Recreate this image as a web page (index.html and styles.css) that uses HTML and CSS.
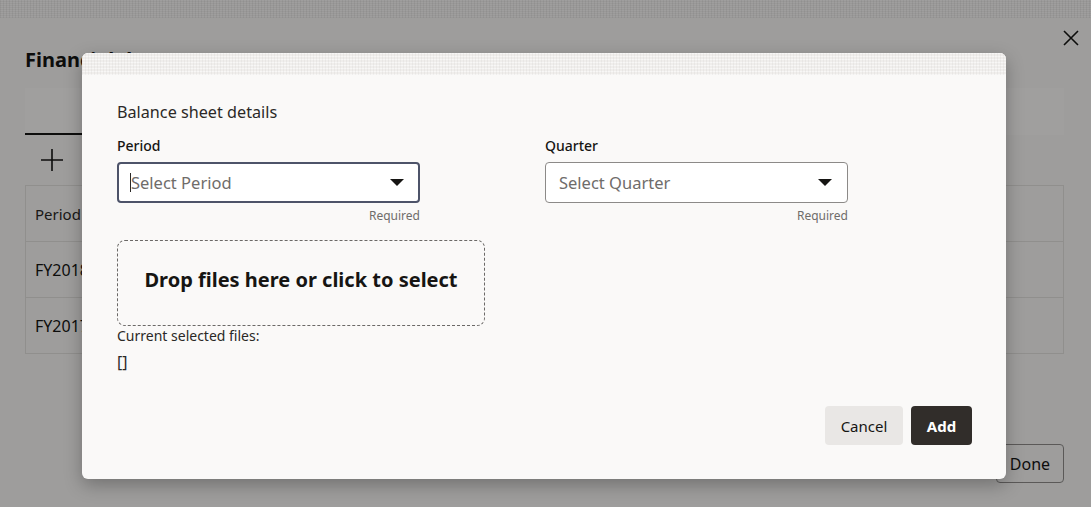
FILE: index.html
```html
<!DOCTYPE html>
<html lang="en">
<head>
<meta charset="utf-8">
<title>Balance sheet details</title>
<link rel="stylesheet" href="styles.css">
</head>
<body>
<div class="page">
  <div class="page-texture"></div>
  <div class="page-body">
    <div class="title-row">
      <h1 class="page-title">Financial documents</h1>
      <button class="close-btn" aria-label="Close">
        <svg width="16" height="16" viewBox="0 0 16 16"><path d="M1 1 L15 15 M15 1 L1 15" stroke="#161513" stroke-width="1.6" fill="none"/></svg>
      </button>
    </div>
    <div class="tabs"><div class="tab"></div></div>
    <div class="toolbar">
      <svg width="22" height="22" viewBox="0 0 22 22"><path d="M11 0 V22 M0 11 H22" stroke="#161513" stroke-width="1.6"/></svg>
    </div>
    <table class="docs">
      <tr><th>Period</th></tr>
      <tr><td>FY2018</td></tr>
      <tr><td>FY2017</td></tr>
    </table>
    <div class="page-footer"><button class="done-btn">Done</button></div>
  </div>
</div>
<div class="overlay"></div>
<div class="modal">
  <div class="modal-texture"></div>
  <div class="modal-body">
    <h2 class="modal-title">Balance sheet details</h2>
    <div class="fields">
      <div class="field">
        <label class="field-label">Period</label>
        <div class="select focused">
          <span class="cursor"></span><span class="placeholder">Select Period</span>
          <span class="arrow"></span>
        </div>
        <div class="help">Required</div>
      </div>
      <div class="field">
        <label class="field-label">Quarter</label>
        <div class="select">
          <span class="placeholder">Select Quarter</span>
          <span class="arrow"></span>
        </div>
        <div class="help">Required</div>
      </div>
    </div>
    <div class="dropzone">Drop files here or click to select</div>
    <div class="files-label">Current selected files:</div>
    <div class="files-value">[]</div>
    <div class="actions">
      <button class="btn btn-cancel">Cancel</button>
      <button class="btn btn-add">Add</button>
    </div>
  </div>
</div>
</body>
</html>
```
FILE: styles.css
```css
* { box-sizing: border-box; }
html, body { margin: 0; padding: 0; }
body {
  width: 1091px;
  height: 507px;
  overflow: hidden;
  font-family: "Noto Sans", "Liberation Sans", sans-serif;
  color: #161513;
  background: #faf9f8;
  position: relative;
}
button { font-family: inherit; }

.page { height: 507px; }
.page-texture {
  height: 18px;
  background-color: #fcfbfa;
  background-image:
    repeating-linear-gradient(90deg, rgba(0,0,0,.05) 0 1px, transparent 1px 3px),
    repeating-linear-gradient(0deg, rgba(0,0,0,.04) 0 1px, transparent 1px 2px);
}
.page-body { padding: 0 27px 0 25px; }
.title-row {
  display: flex;
  justify-content: space-between;
  align-items: flex-start;
  height: 70px;
}
.page-title {
  margin: 30px 0 0;
  font-size: 20px;
  font-weight: 700;
  line-height: 24px;
}
.close-btn {
  margin: 12px -15px 0 0;
  background: none; border: 0; padding: 0;
  width: 16px; height: 16px;
}
.tabs {
  height: 47px;
  background: #fdfcfb;
  display: flex;
  align-items: flex-end;
}
.tab { width: 110px; height: 2px; background: #161513; }
.toolbar {
  height: 50px;
  padding: 14px 0 0 16px;
}
.docs {
  width: 100%;
  border-collapse: collapse;
  font-size: 16px;
  background: #faf9f8;
}
.docs th, .docs td {
  height: 56px;
  text-align: left;
  padding: 0 9px;
  border: 1px solid #e4e2e0;
}
.docs th { font-weight: 400; font-size: 15px; color: #2b2927; }
.page-footer {
  display: flex;
  justify-content: flex-end;
  padding-top: 90px;
}
.done-btn {
  width: 68px; height: 39px;
  background: #faf9f8;
  border: 1px solid #908e8c;
  border-radius: 4px;
  font-size: 16px;
  color: #161513;
}

.overlay {
  position: absolute;
  inset: 0;
  background: rgba(0,0,0,.37);
}

.modal {
  position: absolute;
  left: 82px;
  top: 53px;
  width: 924px;
  height: 426px;
  background: #faf9f8;
  border-radius: 6px;
  overflow: hidden;
  box-shadow: 0 6px 18px rgba(0,0,0,.28);
}
.modal-texture {
  height: 22px;
  background-color: #f0eeec;
  background-image:
    repeating-linear-gradient(90deg, rgba(0,0,0,.035) 0 1px, transparent 1px 3px),
    repeating-linear-gradient(0deg, rgba(255,255,255,.5) 0 1px, transparent 1px 3px);
}
.modal-body { padding: 26px 34px 0 35px; }
.modal-title {
  margin: 0 0 14px;
  font-size: 16.2px;
  font-weight: 400;
  line-height: 22px;
  color: #2b2927;
}
.fields {
  display: grid;
  grid-template-columns: 303px 303px;
  column-gap: 125px;
}
.field-label {
  display: block;
  font-size: 14px;
  font-weight: 500;
  line-height: 18px;
  margin-bottom: 7px;
}
.select {
  position: relative;
  height: 41px;
  background: #fff;
  border: 1px solid #8c8a88;
  border-radius: 4px;
  display: flex;
  align-items: center;
  padding: 0 13px;
}
.select.focused { border: 2px solid #4d5369; padding-left: 11px; }
.placeholder { font-size: 16.5px; color: #6f6c6a; }
.cursor {
  width: 1px; height: 19px; background: #2b2927;
}
.arrow {
  position: absolute;
  right: 15px;
  top: 16px;
  width: 0; height: 0;
  border-left: 7px solid transparent;
  border-right: 7px solid transparent;
  border-top: 7px solid #161513;
}
.select.focused .arrow { right: 14px; top: 15px; }
.help {
  text-align: right;
  font-size: 12px;
  line-height: 16px;
  color: #6f6c6a;
  margin-top: 5px;
}
.dropzone {
  margin-top: 16px;
  width: 368px;
  height: 86px;
  border: 1px dashed #6b6967;
  border-radius: 8px;
  display: flex;
  align-items: center;
  justify-content: center;
  padding-bottom: 8px;
  font-size: 20px;
  font-weight: 700;
  color: #161513;
}
.files-label {
  font-size: 14px;
  line-height: 20px;
  color: #2b2927;
}
.files-value {
  font-size: 16px;
  line-height: 22px;
  margin-top: 5px;
  color: #2b2927;
}
.actions {
  display: flex;
  justify-content: flex-end;
  gap: 8px;
  margin-top: 33px;
}
.btn {
  height: 39px;
  border: 0;
  border-radius: 4px;
  font-size: 15px;
}
.btn-cancel { width: 78px; background: #e9e7e5; color: #161513; }
.btn-add { width: 61px; background: #312d2a; color: #fff; font-weight: 700; }
```
